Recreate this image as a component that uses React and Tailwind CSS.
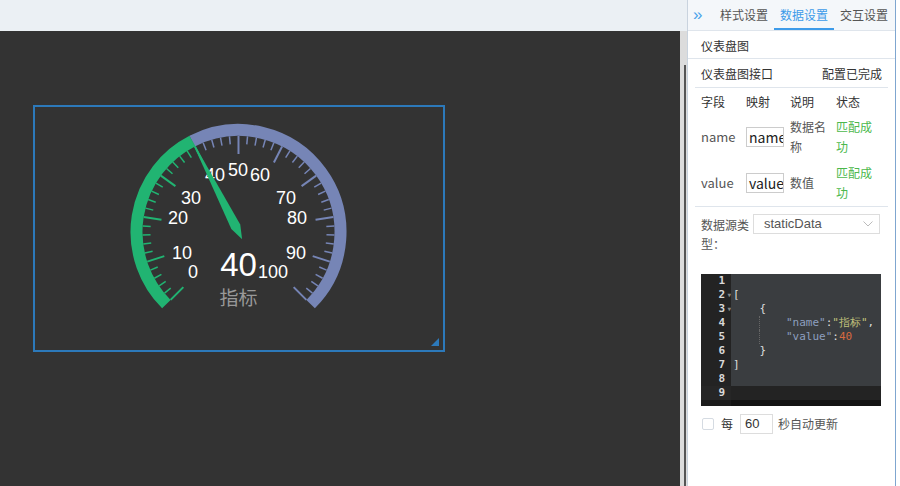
import React from 'react';

const C = [238.5, 232];
const R = 102;

function pt(r, deg) {
  const a = (deg * Math.PI) / 180;
  return [C[0] + r * Math.cos(a), C[1] - r * Math.sin(a)];
}

function arc(from, to) {
  const [x1, y1] = pt(R, from);
  const [x2, y2] = pt(R, to);
  const large = from - to > 180 ? 1 : 0;
  return `M${x1} ${y1} A${R} ${R} 0 ${large} 1 ${x2} ${y2}`;
}

const GREEN = '#21b472';
const BLUE = '#7685b6';

const labels = [
  ['0', 193, 272],
  ['10', 182, 253],
  ['20', 178, 218],
  ['30', 191, 198],
  ['40', 215, 175],
  ['50', 238, 170],
  ['60', 260, 175],
  ['70', 286, 198],
  ['80', 297, 218],
  ['90', 296, 253],
  ['100', 273, 272],
];

function Gauge() {
  const value = 40;
  const valAngle = 225 - value * 2.7;
  const ticks = [];
  for (let i = 0; i <= 50; i++) {
    const v = i * 2;
    const ang = 225 - v * 2.7;
    const major = i % 5 === 0;
    const [x1, y1] = pt(96, ang);
    const [x2, y2] = pt(major ? 78 : 88, ang);
    ticks.push(
      <line
        key={i}
        x1={x1}
        y1={y1}
        x2={x2}
        y2={y2}
        stroke={v <= value ? GREEN : BLUE}
        strokeWidth={major ? 2 : 1.5}
      />
    );
  }

  // needle: kite shape
  const d = [Math.cos((valAngle * Math.PI) / 180), -Math.sin((valAngle * Math.PI) / 180)];
  const n = [-d[1], d[0]];
  const at = (s, w) => [C[0] + d[0] * s + n[0] * w, C[1] + d[1] * s + n[1] * w];
  const needle = [at(108, 0), at(6, 5), at(-8, 0), at(6, -5)].map((p) => p.join(',')).join(' ');

  return (
    <svg width="408" height="243" className="block">
      <g transform="translate(-35,-107)">
        <path d={arc(225, valAngle)} stroke={GREEN} strokeWidth="12" fill="none" />
        <path d={arc(valAngle, -45)} stroke={BLUE} strokeWidth="12" fill="none" />
        {ticks}
        {labels.map(([t, x, y]) => (
          <text
            key={t}
            x={x}
            y={y}
            fill="#ffffff"
            fontSize="18"
            textAnchor="middle"
            dominantBaseline="central"
            fontFamily="'Liberation Sans', Arial, sans-serif"
          >
            {t}
          </text>
        ))}
        <polygon points={needle} fill={GREEN} />
        <text
          x="238.5"
          y="264"
          fill="#ffffff"
          fontSize="33"
          textAnchor="middle"
          dominantBaseline="central"
          fontFamily="'Liberation Sans', Arial, sans-serif"
        >
          40
        </text>
        <text
          x="238.5"
          y="296"
          fill="#999999"
          fontSize="19"
          textAnchor="middle"
          dominantBaseline="central"
          fontFamily="'Noto Sans CJK SC', sans-serif"
        >
          指标
        </text>
      </g>
    </svg>
  );
}

const codeLines = [
  [],
  [['[', '#dddddd']],
  [['    {', '#dddddd']],
  [
    ['        ', '#ddd'],
    ['"name"', '#8d9fbf'],
    [':', '#dddddd'],
    ['"指标"', '#c1c27c'],
    [',', '#dddddd'],
  ],
  [
    ['        ', '#ddd'],
    ['"value"', '#8d9fbf'],
    [':', '#dddddd'],
    ['40', '#d8693f'],
  ],
  [['    }', '#dddddd']],
  [[']', '#dddddd']],
  [],
  [],
];

function CodeEditor() {
  return (
    <div className="mt-[21px] w-[180px] h-[132px] flex bg-[#151515] overflow-hidden font-['DejaVu_Sans_Mono',monospace] text-[11px] leading-[14px]">
      <div className="w-[30px] bg-[#1c1c1c] flex flex-col">
        {codeLines.map((_, i) => (
          <div
            key={i}
            className={`h-[14px] flex items-center justify-end pr-[6px] font-bold text-[#d8d8d8] ${i === 8 ? 'bg-[#262626]' : 'bg-[#232323]'}`}
          >
            <span className="relative">
              {i + 1}
              {(i === 1 || i === 2) && (
                <span className="absolute left-[9px] top-[0px] text-[6px] text-[#888]">▼</span>
              )}
            </span>
          </div>
        ))}
      </div>
      <div className="flex-1 flex flex-col">
        {codeLines.map((parts, i) => (
          <div
            key={i}
            className={`relative h-[14px] whitespace-pre pl-[2px] ${i === 8 ? 'bg-[#232323]' : 'bg-[#3a3d40]'}`}
          >
            {parts.map(([t, c], j) => (
              <span key={j} style={{ color: c }}>
                {t}
              </span>
            ))}
            {(i === 3 || i === 4) && (
              <span className="absolute left-[28px] top-0 h-[14px] border-l border-dotted border-[#666]" />
            )}
          </div>
        ))}
        <div className="flex-1 bg-[#141414]" />
      </div>
    </div>
  );
}

function Panel() {
  return (
    <div className="w-[209px] h-full border-l border-r border-l-[#c9d3de] border-r-[#7fa6d0] bg-white flex flex-col font-['Noto_Sans_CJK_SC',sans-serif] text-[12px] text-[#333]">
      <div className="h-[31px] shrink-0 flex items-stretch bg-[#f4f7fa] border-b border-[#dfe5ec]">
        <span className="w-[26px] pl-[5px] flex items-center text-[17px] text-[#4aa3ea] font-['Liberation_Sans',sans-serif]">»</span>
        <div className="flex">
          <span className="w-[60px] flex items-center justify-center text-[#555]">样式设置</span>
          <span className="w-[60px] flex items-center justify-center text-[#3d9be9] border-b-2 border-[#3d9be9] pt-[2px]">数据设置</span>
          <span className="w-[60px] flex items-center justify-center text-[#555]">交互设置</span>
        </div>
      </div>
      <div className="h-[28px] shrink-0 flex items-center pt-[2px] px-[13px] border-b border-[#dfe5ec]">仪表盘图</div>
      <div className="h-[28px] shrink-0 flex items-center justify-between pt-[1px] px-[13px]">
        <span>仪表盘图接口</span>
        <span>配置已完成</span>
      </div>
      <div className="mx-[7px] border-b border-[#dfe5ec]" />
      <div className="px-[13px] pt-[2px]">
        <div className="h-[24px] flex items-center">
          <span className="w-[45px]">字段</span>
          <span className="w-[44px]">映射</span>
          <span className="w-[46px]">说明</span>
          <span>状态</span>
        </div>
        <div className="h-[46px] flex items-center leading-[20px]">
          <span className="w-[45px] text-[#555] text-[13px]">name</span>
          <span className="w-[44px]">
            <span className="block w-[38px] h-[20px] border border-[#ccc] overflow-hidden whitespace-nowrap pl-[2px] leading-[18px] text-[14px] text-[#222]">name</span>
          </span>
          <span className="w-[46px] text-[#555] break-all">数据名称</span>
          <span className="w-[45px] text-[#4cb84c] break-all">匹配成功</span>
        </div>
        <div className="h-[46px] flex items-center leading-[20px]">
          <span className="w-[45px] text-[#555] text-[13px]">value</span>
          <span className="w-[44px]">
            <span className="block w-[38px] h-[20px] border border-[#ccc] overflow-hidden whitespace-nowrap pl-[2px] leading-[18px] text-[14px] text-[#222]">value</span>
          </span>
          <span className="w-[46px] text-[#555]">数值</span>
          <span className="w-[45px] text-[#4cb84c] break-all">匹配成功</span>
        </div>
      </div>
      <div className="mx-[7px] border-b border-[#dfe5ec]" />
      <div className="px-[13px] pt-[7px]">
        <div className="flex items-start">
          <span className="w-[52px] leading-[19px] text-[#555] pt-[1px]">数据源类型：</span>
          <div className="w-[127px] h-[20px] border border-[#ddd] flex items-center justify-between pl-[10px] pr-[6px] text-[#555]">
            <span className="font-['Liberation_Sans',sans-serif] text-[13px]">staticData</span>
            <svg width="10" height="6" viewBox="0 0 10 6">
              <path d="M0.5 0.5 L5 5 L9.5 0.5" stroke="#bbb" fill="none" strokeWidth="1" />
            </svg>
          </div>
        </div>
        <CodeEditor />
        <div className="mt-[8px] flex items-center h-[20px]">
          <span className="w-[12px] h-[12px] border border-[#d5dbe2] rounded-[2px] ml-[1px]" />
          <span className="ml-[7px]">每</span>
          <span className="ml-[7px] w-[33px] h-[20px] border border-[#ddd] flex items-center pl-[4px] font-['Liberation_Sans',sans-serif] text-[13px]">60</span>
          <span className="ml-[5px] text-[#555]">秒自动更新</span>
        </div>
      </div>
    </div>
  );
}

export default function App() {
  return (
    <div className="w-[900px] h-[486px] flex bg-white overflow-hidden">
      <div className="w-[687px] flex flex-col">
        <div className="h-[31px] shrink-0 bg-[#ebf0f4]" />
        <div className="flex-1 flex">
          <div className="w-[680px] bg-[#333333]">
            <div className="relative ml-[33px] mt-[74px] w-[412px] h-[247px] border-2 border-[#2c79ba]">
              <Gauge />
              <span className="absolute right-[4px] bottom-[4px] w-0 h-0 border-l-[8px] border-l-transparent border-b-[8px] border-b-[#2c79ba]" />
            </div>
          </div>
          <div className="w-[7px] bg-[#dcdcdc] flex pl-[4px]">
            <div className="w-[2px] mt-[34px] bg-[#555]" />
          </div>
        </div>
      </div>
      <Panel />
    </div>
  );
}
